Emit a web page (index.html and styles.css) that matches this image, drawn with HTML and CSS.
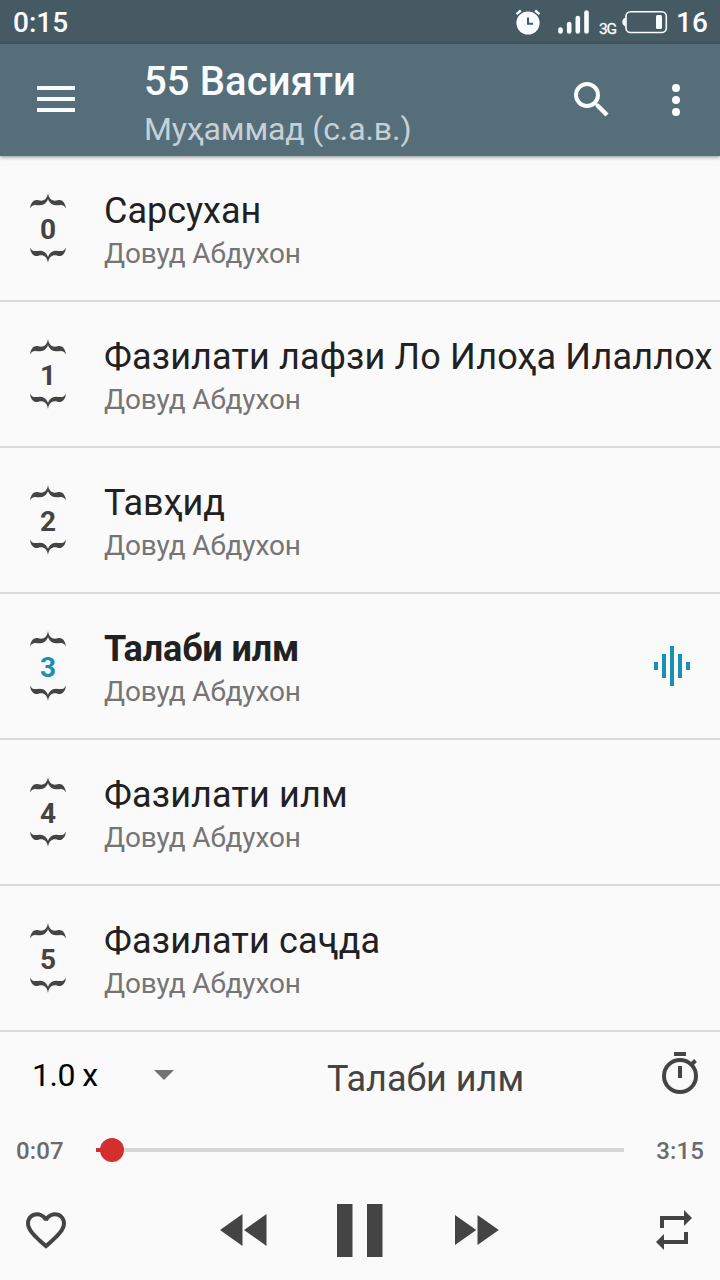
FILE: index.html
```html
<!DOCTYPE html>
<html lang="tg">
<head>
<meta charset="utf-8">
<title>55 Васияти</title>
<link rel="stylesheet" href="styles.css">
</head>
<body>
<svg class="defs" width="0" height="0">
  <symbol id="brace" viewBox="0 0 36 16"><path d="M0 15.500C.8 9 4 6 8.500 7.200C12.500 8.600 17 7 18 0C19 7 23.500 8.600 27.500 7.200C32 6 35.200 9 36 15.500C33.500 10.500 30.500 12.200 26 12.200C21.500 12.200 19 9 18 6C17 9 14.500 12.200 10 12.200C5.500 12.200 2.500 10.500 0 15.500Z"/></symbol>
</svg>
<div class="screen">
  <header class="status">
    <span class="clock">0:15</span>
    <svg class="alarm" width="26" height="26" viewBox="0 0 26 26"><circle cx="13" cy="14" r="11.600" fill="currentColor"/><path d="M1.500 5.200L5.800 1.500M24.500 5.200L20.200 1.500" stroke="currentColor" stroke-width="2.400"/><path d="M13 8.500V14.800H18" fill="none" stroke="#465a64" stroke-width="2"/></svg>
    <svg class="signal" width="32" height="24" viewBox="0 0 32 24"><path d="M2.500 19.500V21.500M11.200 14V21.500M19.800 8V21.500M28.500 2.500V21.500" stroke="currentColor" stroke-width="4.600" stroke-linecap="round"/></svg>
    <span class="network">3G</span>
    <svg class="battery" width="46" height="24" viewBox="0 0 46 24"><rect x="4" y="1.800" width="40.300" height="20.700" rx="4.500" fill="none" stroke="currentColor" stroke-width="1.600"/><path d="M3.500 7.500C1.500 8 .3 10 .3 12S1.500 16 3.500 16.500Z" fill="currentColor"/><rect x="34" y="5" width="6" height="14" rx="1.500" fill="currentColor"/></svg>
    <span class="percent">16</span>
  </header>
  <div class="appbar">
    <svg class="menu" width="38" height="26" viewBox="0 0 38 26"><path d="M0 2H38M0 13H38M0 24H38" stroke="currentColor" stroke-width="4"/></svg>
    <div class="heading">
      <h1 class="heading-title">55 Васияти</h1>
      <div class="heading-sub">Муҳаммад (с.а.в.)</div>
    </div>
    <svg class="search" width="36" height="36" viewBox="0 0 36 36"><circle cx="13" cy="13" r="11" fill="none" stroke="currentColor" stroke-width="4"/><path d="M20.500 20.500L23.500 23.500" stroke="currentColor" stroke-width="3"/><path d="M23 23L33 33" stroke="currentColor" stroke-width="4.400"/></svg>
    <svg class="more" width="8" height="32" viewBox="0 0 8 32"><g fill="currentColor"><circle cx="4" cy="4" r="4"/><circle cx="4" cy="16" r="4"/><circle cx="4" cy="28" r="4"/></g></svg>
  </div>
  <main class="list">
    <div class="row">
      <div class="badge"><svg class="brace"><use href="#brace"/></svg><span class="num">0</span><svg class="brace flip"><use href="#brace"/></svg></div>
      <div class="info"><div class="title">Сарсухан</div><div class="author">Довуд Абдухон</div></div>
    </div>
    <div class="row">
      <div class="badge"><svg class="brace"><use href="#brace"/></svg><span class="num">1</span><svg class="brace flip"><use href="#brace"/></svg></div>
      <div class="info"><div class="title wide">Фазилати лафзи Ло Илоҳа Илаллох</div><div class="author">Довуд Абдухон</div></div>
    </div>
    <div class="row">
      <div class="badge"><svg class="brace"><use href="#brace"/></svg><span class="num">2</span><svg class="brace flip"><use href="#brace"/></svg></div>
      <div class="info"><div class="title">Тавҳид</div><div class="author">Довуд Абдухон</div></div>
    </div>
    <div class="row active">
      <div class="badge"><svg class="brace"><use href="#brace"/></svg><span class="num">3</span><svg class="brace flip"><use href="#brace"/></svg></div>
      <div class="info"><div class="title">Талаби илм</div><div class="author">Довуд Абдухон</div></div>
      <svg class="wave" width="36" height="40" viewBox="0 0 36 40"><path d="M2 16V24M10 8V32M18 0V40M26 8V32M34 16V24" stroke="currentColor" stroke-width="4"/></svg>
    </div>
    <div class="row">
      <div class="badge"><svg class="brace"><use href="#brace"/></svg><span class="num">4</span><svg class="brace flip"><use href="#brace"/></svg></div>
      <div class="info"><div class="title wide">Фазилати илм</div><div class="author">Довуд Абдухон</div></div>
    </div>
    <div class="row">
      <div class="badge"><svg class="brace"><use href="#brace"/></svg><span class="num">5</span><svg class="brace flip"><use href="#brace"/></svg></div>
      <div class="info"><div class="title wide">Фазилати саҷда</div><div class="author">Довуд Абдухон</div></div>
    </div>
  </main>
  <footer class="player">
    <div class="now">
      <span class="speed">1.0 x</span>
      <svg class="caret" width="20" height="10" viewBox="0 0 20 10"><path d="M0 0H20L10 10Z" fill="#737373"/></svg>
      <span class="track">Талаби илм</span>
      <svg class="timer" width="36" height="42" viewBox="0 0 36 42"><g fill="none" stroke="currentColor" stroke-width="4"><circle cx="18" cy="24" r="16"/><path d="M12 2H24M18 14V26M29 13L33.500 8.500"/></g></svg>
    </div>
    <div class="seek">
      <span class="time">0:07</span>
      <div class="bar"><div class="played"></div><div class="knob"></div></div>
      <span class="time">3:15</span>
    </div>
    <div class="controls">
      <svg class="heart" width="40" height="37" viewBox="2 3 20 18.350"><path fill="currentColor" d="M16.500 3c-1.740 0-3.410.81-4.500 2.090C10.910 3.810 9.240 3 7.500 3 4.420 3 2 5.420 2 8.500c0 3.780 3.400 6.860 8.550 11.540L12 21.350l1.450-1.320C18.600 15.360 22 12.280 22 8.500 22 5.420 19.580 3 16.500 3zm-4.400 15.550l-.1.100-.1-.1C7.140 14.240 4 11.390 4 8.500 4 6.500 5.500 5 7.500 5c1.540 0 3.040.99 3.570 2.360h1.870C13.460 5.990 14.960 5 16.500 5c2 0 3.500 1.500 3.500 3.500 0 2.890-3.140 5.740-7.900 10.050z"/></svg>
      <svg class="rewind" width="47" height="32" viewBox="0 0 47 32"><path d="M22.500 0V32L0 16ZM46.500 0V32L24 16Z" fill="currentColor"/></svg>
      <svg class="pause" width="46" height="53" viewBox="0 0 46 53"><path d="M0 0H15.500V53H0ZM30 0H45.500V53H30Z" fill="currentColor"/></svg>
      <svg class="forward" width="44" height="30" viewBox="0 0 44 30"><path d="M0 0L21.300 15L0 30ZM22.500 0L43.800 15L22.500 30Z" fill="currentColor"/></svg>
      <svg class="repeat" width="36" height="40" viewBox="0 0 36 40"><path d="M4 18V6H28V0L36 8L28 16V10H8V18ZM32 22V34H8V40L0 32L8 24V30H28V22Z" fill="currentColor"/></svg>
    </div>
  </footer>
</div>
</body>
</html>
```
FILE: styles.css
```css
* { box-sizing: border-box; }
body { margin: 0; font-family: Roboto, "Noto Sans", sans-serif; background: #fafafa; }
svg { display: block; flex: none; }
.defs { position: absolute; }
.screen { width: 720px; height: 1280px; overflow: hidden; display: flex; flex-direction: column; white-space: nowrap; }

.status { height: 44px; background: #465a64; color: #fafdff; display: flex; align-items: center; padding: 0 12px 0 13px; flex: none; }
.clock { font-size: 28px; font-weight: 500; flex: 1; }
.alarm { margin: 0 17px 1px 0; }
.signal { margin-right: 9px; }
.network { font-size: 15.500px; font-weight: 400; width: 17px; padding-top: 13px; margin-right: 6px; line-height: 18px; letter-spacing: -1.300px; -webkit-text-stroke: .3px currentColor; }
.battery { margin-right: 8px; }
.percent { font-size: 28px; font-weight: 500; width: 32px; }

.appbar { height: 112px; background: #566e79; color: #fafdff; display: flex; align-items: center; padding: 0 40px 0 37px; flex: none; position: relative; box-shadow: 0 1px 4px rgba(0, 0, 0, .45); }
.menu { margin: 0 69px 2px 0; }
.heading { flex: 1; padding-top: 8px; }
.heading-title { margin: 0; font-size: 40px; font-weight: 500; line-height: 48px; letter-spacing: .1px; }
.heading-sub { font-size: 32px; line-height: 44px; letter-spacing: -.1px; color: #c6d1d7; margin-top: 1px; }
.search { margin-right: 62px; }

.list { flex: none; }
.row { height: 146px; border-bottom: 2px solid #dadada; display: flex; padding: 33px 30px 0; color: #444; }
.badge { width: 36px; height: 70px; margin: 4px 38px 0 0; display: flex; flex-direction: column; align-items: center; justify-content: space-between; flex: none; }
.brace { width: 36px; height: 16px; fill: #444; }
.flip { transform: scaleY(-1); }
.num { font-size: 28px; font-weight: 700; line-height: 32px; padding-top: 3px; }
.info { flex: none; }
.title { font-size: 36px; line-height: 42px; color: #212121; padding-top: 1px; }
.wide { letter-spacing: .17px; }
.author { font-size: 28px; line-height: 33px; letter-spacing: -.14px; color: #757575; margin-top: 5px; }
.active .title { font-weight: 700; letter-spacing: -.1px; }
.active .num, .wave { color: #1c90b0; }
.wave { margin: 19px 0 0 auto; }

.player { flex: 1; display: flex; flex-direction: column; color: #444; }
.now { height: 88px; display: flex; align-items: center; padding: 0 22px 0 32px; }
.speed { font-size: 32px; letter-spacing: -.5px; color: #000; width: 122px; margin-bottom: 2px; }
.caret { margin-bottom: 2px; }
.track { font-size: 36px; flex: 1; margin: 6px 0 0 153px; }
.timer { margin-bottom: 6px; }
.seek { height: 60px; display: flex; align-items: center; justify-content: space-between; padding: 0 16px; }
.time { font-size: 24px; font-weight: 500; color: #6b6b6b; padding-top: 2px; letter-spacing: .1px; }
.bar { width: 528px; height: 4px; background: #d6d6d6; position: relative; }
.played { width: 16px; height: 4px; background: #d32f2f; }
.knob { position: absolute; left: 4px; top: -10px; width: 24px; height: 24px; border-radius: 50%; background: #d32f2f; }
.controls { height: 100px; display: flex; align-items: center; padding: 0 28px 0 26px; }
.rewind { margin-left: 154px; }
.pause { margin-left: 70px; }
.forward { margin-left: 72px; }
.repeat { margin-left: auto; }
```
